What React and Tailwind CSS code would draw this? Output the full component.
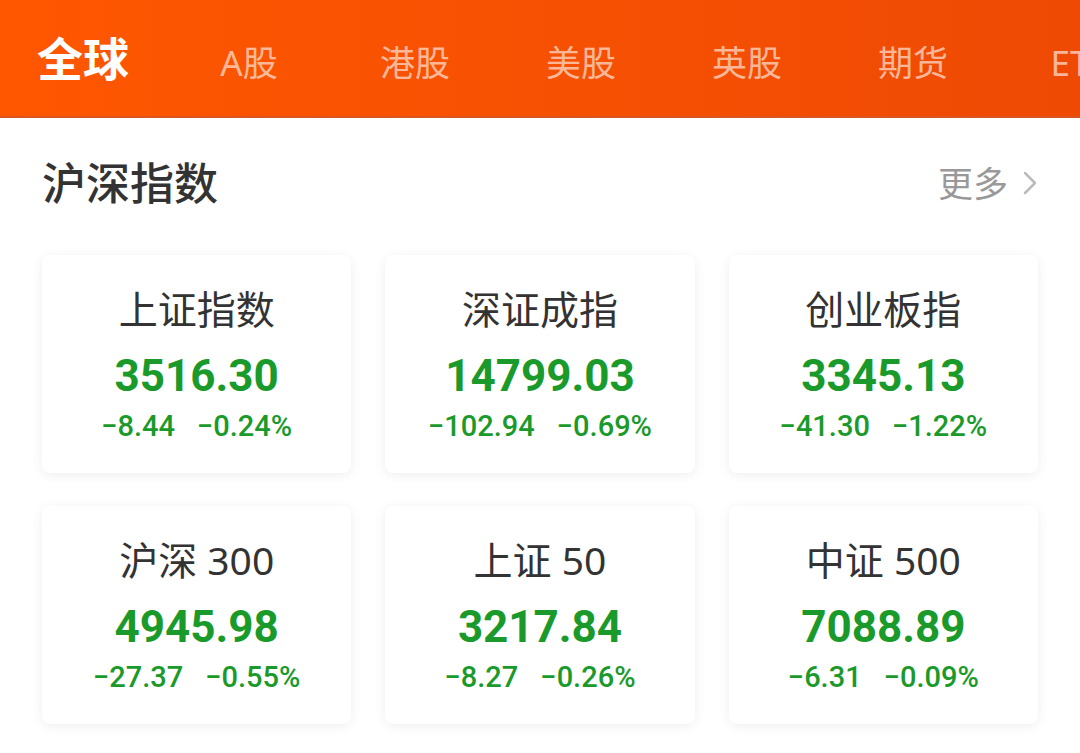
import React from 'react';

const TABS = ['全球', 'A股', '港股', '美股', '英股', '期货', 'ETF'];

const INDICES = [
  { name: '上证指数', value: '3516.30', change: '-8.44', pct: '-0.24%' },
  { name: '深证成指', value: '14799.03', change: '-102.94', pct: '-0.69%' },
  { name: '创业板指', value: '3345.13', change: '-41.30', pct: '-1.22%' },
  { name: '沪深 300', value: '4945.98', change: '-27.37', pct: '-0.55%' },
  { name: '上证 50', value: '3217.84', change: '-8.27', pct: '-0.26%' },
  { name: '中证 500', value: '7088.89', change: '-6.31', pct: '-0.09%' }
];

const cjk = { fontFamily: '"Noto Sans", "Noto Sans CJK SC", sans-serif' };
const num = { fontFamily: 'Roboto, "Noto Sans", sans-serif' };

function IndexCard({ item }) {
  return (
    <div className="h-[218px] bg-white rounded-lg shadow-[0_2px_12px_rgba(0,0,0,0.07)] flex flex-col items-center">
      <div className="mt-[34px] text-[39px] leading-none text-[#333333]" style={cjk}>{item.name}</div>
      <div className="mt-[26px] text-[44px] leading-none font-bold text-[#1a9a2a]" style={num}>{item.value}</div>
      <div className="mt-[14px] flex gap-[22px] text-[29px] leading-none font-medium text-[#1a9a2a]" style={num}>
        <span>{item.change.replace('-', '−')}</span>
        <span>{item.pct.replace('-', '−')}</span>
      </div>
    </div>
  );
}

export default function App() {
  return (
    <div className="w-[1080px] h-[753px] overflow-hidden bg-white" style={cjk}>
      {/* Top market tabs */}
      <div className="h-[118px] flex items-center overflow-hidden bg-gradient-to-r from-[#ff5700] to-[#ee4a04] border-b-2 border-[#d9561e]">
        {TABS.map((tab, i) => (
          <div
            key={tab}
            className={
              'w-[166px] shrink-0 text-center leading-none ' +
              (i === 0 ? 'text-[46px] font-bold text-white' : 'mt-[8px] text-[35px] text-white/60')
            }
          >
            {tab}
          </div>
        ))}
      </div>

      <div className="px-[42px]">
        <div className="h-[130px] flex items-center justify-between">
          <h1 className="text-[44px] font-medium leading-none text-[#333333]">沪深指数</h1>
          <div className="flex items-center gap-[14px] text-[#999999]">
            <span className="text-[35px] leading-none">更多</span>
            <svg width="16" height="24" viewBox="0 0 16 24" fill="none">
              <polyline points="3,2 13,12 3,22" stroke="#bbbbbb" strokeWidth="2.5" strokeLinecap="round" strokeLinejoin="round" />
            </svg>
          </div>
        </div>

        <div className="mt-[7px] grid grid-cols-3 gap-x-[34px] gap-y-[33px]">
          {INDICES.map((item) => (
            <IndexCard key={item.name} item={item} />
          ))}
        </div>
      </div>
    </div>
  );
}
